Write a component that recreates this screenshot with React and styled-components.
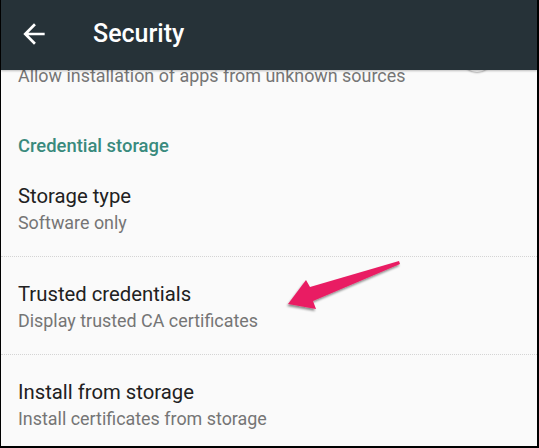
import React from "react";
import styled, { createGlobalStyle } from "styled-components";

const Global = createGlobalStyle`
  html, body { margin: 0; padding: 0; background: #000; }
  body { font-family: Roboto, "Noto Sans", sans-serif; -webkit-font-smoothing: antialiased; }
`;

const Frame = styled.div`
  width: 539px;
  height: 448px;
  box-sizing: border-box;
  border-left: 1px solid #000;
  border-right: 2px solid #000;
  border-bottom: 2px solid #000;
  background: #fafafa;
  display: flex;
  flex-direction: column;
  position: relative;
  overflow: hidden;
`;

const AppBar = styled.header`
  height: 70px;
  flex: none;
  background: #263238;
  display: flex;
  align-items: center;
  position: relative;
  z-index: 2;
  box-shadow: 0 1px 2px rgba(0, 0, 0, 0.25);
`;

const BackButton = styled.button`
  width: 32px;
  height: 32px;
  margin-left: 17px;
  margin-top: -2px;
  padding: 0;
  border: 0;
  background: none;
  display: flex;
  align-items: center;
  justify-content: center;
`;

const Title = styled.h1`
  margin: -2px 0 0 43px;
  color: #fff;
  font-size: 25px;
  line-height: 30px;
  font-weight: 500;
`;

const Viewport = styled.div`
  flex: 1;
  overflow: hidden;
  position: relative;
`;

const Scroll = styled.div`
  margin-top: -59px;
  display: flex;
  flex-direction: column;
`;

const Item = styled.div`
  height: 98px;
  box-sizing: border-box;
  padding: 0 17px;
  display: flex;
  align-items: flex-start;
  border-top: ${(p) => (p.$divider ? "1px dotted #d4d4d4" : "1px solid transparent")};
`;

const ItemText = styled.div`
  flex: 1;
  padding-top: 25px;
  display: flex;
  flex-direction: column;
  gap: 4px;
`;

const ItemTitle = styled.div`
  color: #212121;
  font-size: 20.3px;
  line-height: 24px;
  height: 24px;
  white-space: nowrap;
`;

const ItemSub = styled.div`
  color: #757575;
  font-size: 17.9px;
  line-height: 22px;
  white-space: nowrap;
`;

const SwitchThumb = styled.div`
  width: 30px;
  height: 30px;
  margin: 30px 28px 0 0;
  border-radius: 50%;
  background: #f3f3f3;
  box-shadow: 0 1px 2px rgba(0, 0, 0, 0.3);
`;

const Category = styled.div`
  height: 49px;
  box-sizing: border-box;
  padding: 27px 17px 0;
  color: #398a7d;
  font-size: 18.4px;
  font-weight: 500;
  line-height: 20px;
`;

const Pointer = styled.svg`
  position: absolute;
  left: 280px;
  top: 255px;
  width: 130px;
  height: 65px;
  overflow: visible;
  z-index: 3;
`;

export default function App() {
  return (
    <>
      <Global />
      <Frame>
        <AppBar>
          <BackButton aria-label="Back">
            <svg width="32" height="32" viewBox="0 0 24 24">
              <path fill="#fff" d="M20 11H7.83l5.59-5.59L12 4l-8 8 8 8 1.41-1.41L7.83 13H20v-2z" />
            </svg>
          </BackButton>
          <Title>Security</Title>
        </AppBar>
        <Viewport>
          <Scroll>
            <Item>
              <ItemText>
                <ItemTitle aria-hidden="true" />
                <ItemSub>Allow installation of apps from unknown sources</ItemSub>
              </ItemText>
              <SwitchThumb />
            </Item>
            <Category>Credential storage</Category>
            <Item>
              <ItemText>
                <ItemTitle>Storage type</ItemTitle>
                <ItemSub>Software only</ItemSub>
              </ItemText>
            </Item>
            <Item $divider>
              <ItemText>
                <ItemTitle>Trusted credentials</ItemTitle>
                <ItemSub>Display trusted CA certificates</ItemSub>
              </ItemText>
            </Item>
            <Item $divider>
              <ItemText>
                <ItemTitle>Install from storage</ItemTitle>
                <ItemSub>Install certificates from storage</ItemSub>
              </ItemText>
            </Item>
          </Scroll>
        </Viewport>
        <Pointer viewBox="280 255 130 65">
          <defs>
            <filter id="sh" x="-20%" y="-20%" width="140%" height="160%">
              <feDropShadow dx="-1" dy="2" stdDeviation="1.2" floodColor="#000" floodOpacity="0.45" />
            </filter>
          </defs>
          <path
            filter="url(#sh)"
            fill="#e91e63"
            d="M398 261 L309 287 L305 280 L287 304 L315 309 L312 301 L399 264 Z"
          />
        </Pointer>
      </Frame>
    </>
  );
}
